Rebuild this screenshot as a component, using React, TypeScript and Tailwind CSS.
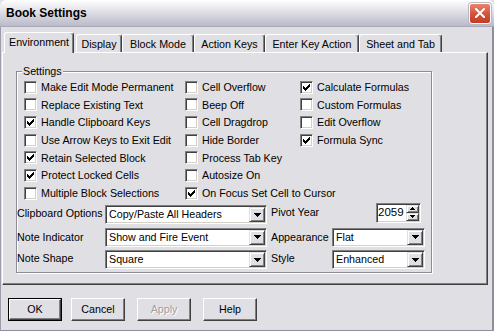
import React from "react";

function Check() {
  return (
    <svg width="7" height="7" viewBox="0 0 7 7" shapeRendering="crispEdges" className="block">
      <rect x="6" y="0" width="1" height="1" fill="#000" />
      <rect x="5" y="1" width="2" height="1" fill="#000" />
      <rect x="0" y="2" width="1" height="1" fill="#000" />
      <rect x="4" y="2" width="3" height="1" fill="#000" />
      <rect x="0" y="3" width="2" height="1" fill="#000" />
      <rect x="3" y="3" width="3" height="1" fill="#000" />
      <rect x="0" y="4" width="5" height="1" fill="#000" />
      <rect x="1" y="5" width="3" height="1" fill="#000" />
      <rect x="2" y="6" width="1" height="1" fill="#000" />
    </svg>
  );
}

function CB({ label, checked }: { label: string; checked?: boolean }) {
  return (
    <div className="flex items-center h-[17.67px]">
      <div className="w-[13px] h-[13px] shrink-0 bg-white border border-t-[#808080] border-l-[#808080] border-b-white border-r-white shadow-[inset_1px_1px_0_#404040,inset_-1px_-1px_0_#d4d0c8] flex items-center justify-center">
        {checked && <Check />}
      </div>
      <span className="ml-[4px] whitespace-nowrap">{label}</span>
    </div>
  );
}

function DownArrow() {
  return (
    <svg width="7" height="4" viewBox="0 0 7 4" shapeRendering="crispEdges" className="block">
      <path d="M0 0h7v1h-1v1h-1v1h-1v1h-1v-1h-1v-1h-1v-1h-1z" fill="#000" />
    </svg>
  );
}

function Combo({ value, className }: { value: string; className: string }) {
  return (
    <div
      className={
        "h-[19px] bg-white border border-t-[#808080] border-l-[#808080] border-b-white border-r-white shadow-[inset_1px_1px_0_#404040,inset_-1px_-1px_0_#d4d0c8] flex items-center p-[1px] " +
        className
      }
    >
      <span className="flex-1 pl-[2px] whitespace-nowrap">{value}</span>
      <div className="w-[16px] h-[15px] bg-[#e0dfe3] border border-t-[#e0dfe3] border-l-[#e0dfe3] border-b-[#404040] border-r-[#404040] shadow-[inset_1px_1px_0_#fff,inset_-1px_-1px_0_#808080] flex items-center justify-center">
        <DownArrow />
      </div>
    </div>
  );
}

function SmallArrow({ up }: { up?: boolean }) {
  return (
    <svg width="5" height="3" viewBox="0 0 5 3" shapeRendering="crispEdges" className="block">
      {up ? (
        <path d="M2 0h1v1h1v1h1v1h-5v-1h1v-1h1z" fill="#000" />
      ) : (
        <path d="M0 0h5v1h-1v1h-1v1h-1v-1h-1v-1h-1z" fill="#000" />
      )}
    </svg>
  );
}

function Spin() {
  return (
    <div className="ml-[44px] -mt-[4px] w-[45px] h-[20px] bg-white border border-t-[#808080] border-l-[#808080] border-b-white border-r-white shadow-[inset_1px_1px_0_#404040,inset_-1px_-1px_0_#d4d0c8] flex p-[1px]">
      <span className="flex-1 text-right pr-[2px] flex items-center justify-end text-[11.5px]">2059</span>
      <div className="w-[15px] flex flex-col">
        <div className="h-[8px] bg-[#e0dfe3] border border-t-[#e0dfe3] border-l-[#e0dfe3] border-b-[#404040] border-r-[#404040] shadow-[inset_1px_1px_0_#fff,inset_-1px_-1px_0_#808080] flex items-center justify-center">
          <SmallArrow up />
        </div>
        <div className="h-[8px] bg-[#e0dfe3] border border-t-[#e0dfe3] border-l-[#e0dfe3] border-b-[#404040] border-r-[#404040] shadow-[inset_1px_1px_0_#fff,inset_-1px_-1px_0_#808080] flex items-center justify-center">
          <SmallArrow />
        </div>
      </div>
    </div>
  );
}

function Tab({ label, className }: { label: string; className: string }) {
  return (
    <div
      className={
        "h-[18px] mb-0 bg-[#e0dfe3] border-t border-l border-t-white border-l-white border-r border-r-[#404040] shadow-[inset_-1px_0_0_#808080] rounded-t-[3px] flex items-center justify-center whitespace-nowrap pt-[1px] " +
        className
      }
    >
      {label}
    </div>
  );
}

function Btn({ label, def, disabled, className }: { label: string; def?: boolean; disabled?: boolean; className: string }) {
  return (
    <div
      className={
        "w-[54px] h-[23px] " +
        (def ? "border border-black " : "") +
        className
      }
    >
      <div className="w-full h-full bg-[#e0dfe3] border border-t-white border-l-white border-b-[#404040] border-r-[#404040] shadow-[inset_-1px_-1px_0_#808080] flex items-center justify-center">
        {disabled ? (
          <span className="text-[#a0a0a4] [text-shadow:1px_1px_0_#fff]">{label}</span>
        ) : (
          <span>{label}</span>
        )}
      </div>
    </div>
  );
}

export default function App() {
  return (
    <div className="w-[494px] h-[331px] overflow-hidden bg-[#e0dfe3] font-['Liberation_Sans',Arial,sans-serif] text-[10.7px] leading-none text-black flex flex-col">
      {/* Title bar */}
      <div className="h-[27px] shrink-0 rounded-t-[6px] bg-linear-to-b from-[#ffffff] via-[#dcdce5] to-[#babac9] border-b border-b-[#a8a8b8] flex items-center justify-between pl-[6px] pr-[3px]">
        <span className="font-bold text-[12px] text-black">Book Settings</span>
        <div className="w-[22px] h-[21px] rounded-[3px] border border-white bg-linear-to-b from-[#e8836d] via-[#d5553b] to-[#c23d25] flex items-center justify-center shadow-[0_0_0_1px_#b8b8c8]">
          <svg width="10" height="10" viewBox="0 0 10 10">
            <path d="M1 1L9 9M9 1L1 9" stroke="#fff" strokeWidth="2" strokeLinecap="square" />
          </svg>
        </div>
      </div>

      {/* Body */}
      <div className="flex-1 flex flex-col pt-[5px] pl-[1px] pr-[4px] border-l border-l-[#9c9cab] border-r-2 border-r-[#8e8e9e] border-b border-b-[#8e8e9e]">
        {/* Tabs */}
        <div className="relative z-10 h-[20px] flex items-end pl-[2px]">
          <div className="w-[70px] h-[21px] -mb-[1px] bg-[#e0dfe3] border-t border-l border-t-white border-l-white border-r border-r-[#404040] shadow-[inset_-1px_0_0_#808080] rounded-t-[3px] flex items-center justify-center whitespace-nowrap pb-[1px]">
            Environment
          </div>
          <Tab label="Display" className="w-[46px] ml-[2px]" />
          <Tab label="Block Mode" className="w-[72px]" />
          <Tab label="Action Keys" className="w-[71px]" />
          <Tab label="Enter Key Action" className="w-[94px]" />
          <Tab label="Sheet and Tab" className="w-[83px]" />
        </div>

        {/* Pane */}
        <div className="h-[233px] shrink-0 border border-t-white border-l-white border-r-[#404040] border-b-[#404040] shadow-[inset_-1px_-1px_0_#808080] pt-[18px] pl-[13px]">
          <div className="relative w-[416px] h-[202px] border border-[#8c8c94] shadow-[1px_1px_0_#fff,inset_1px_1px_0_#fff] pt-[6.5px]">
            <span className="absolute left-[5px] -top-[6px] px-[1px] bg-[#e0dfe3]">Settings</span>
            <div className="flex pl-[7px]">
              <div className="w-[161px] flex flex-col">
                <CB label="Make Edit Mode Permanent" />
                <CB label="Replace Existing Text" />
                <CB label="Handle Clipboard Keys" checked />
                <CB label="Use Arrow Keys to Exit Edit" />
                <CB label="Retain Selected Block" checked />
                <CB label="Protect Locked Cells" checked />
                <CB label="Multiple Block Selections" />
              </div>
              <div className="w-[115px] flex flex-col">
                <CB label="Cell Overflow" />
                <CB label="Beep Off" />
                <CB label="Cell Dragdrop" />
                <CB label="Hide Border" />
                <CB label="Process Tab Key" />
                <CB label="Autosize On" />
                <CB label="On Focus Set Cell to Cursor" checked />
              </div>
              <div className="flex-1 flex flex-col">
                <CB label="Calculate Formulas" checked />
                <CB label="Custom Formulas" />
                <CB label="Edit Overflow" />
                <CB label="Formula Sync" checked />
              </div>
            </div>

            <div className="mt-[3px] flex flex-col gap-[3.5px]">
              <div className="h-[19px] flex items-center">
                <span className="w-[88px] whitespace-nowrap -mt-[2px]">Clipboard Options</span>
                <Combo value="Copy/Paste All Headers" className="w-[162px]" />
                <span className="w-[61px] ml-[4px] whitespace-nowrap -mt-[5px]">Pivot Year</span>
                <Spin />
              </div>
              <div className="h-[19px] flex items-center">
                <span className="w-[88px] whitespace-nowrap">Note Indicator</span>
                <Combo value="Show and Fire Event" className="w-[162px]" />
                <span className="w-[61px] ml-[4px] whitespace-nowrap">Appearance</span>
                <Combo value="Flat" className="w-[93px]" />
              </div>
              <div className="h-[19px] flex items-center">
                <span className="w-[88px] whitespace-nowrap -mt-[2px]">Note Shape</span>
                <Combo value="Square" className="w-[162px]" />
                <span className="w-[61px] ml-[4px] whitespace-nowrap -mt-[2px]">Style</span>
                <Combo value="Enhanced" className="w-[93px]" />
              </div>
            </div>
          </div>
        </div>

        {/* Buttons */}
        <div className="mt-[13px] flex">
          <Btn label="OK" def className="ml-[6px]" />
          <Btn label="Cancel" className="ml-[9px]" />
          <Btn label="Apply" disabled className="ml-[12px]" />
          <Btn label="Help" className="ml-[12px]" />
        </div>
      </div>
    </div>
  );
}
